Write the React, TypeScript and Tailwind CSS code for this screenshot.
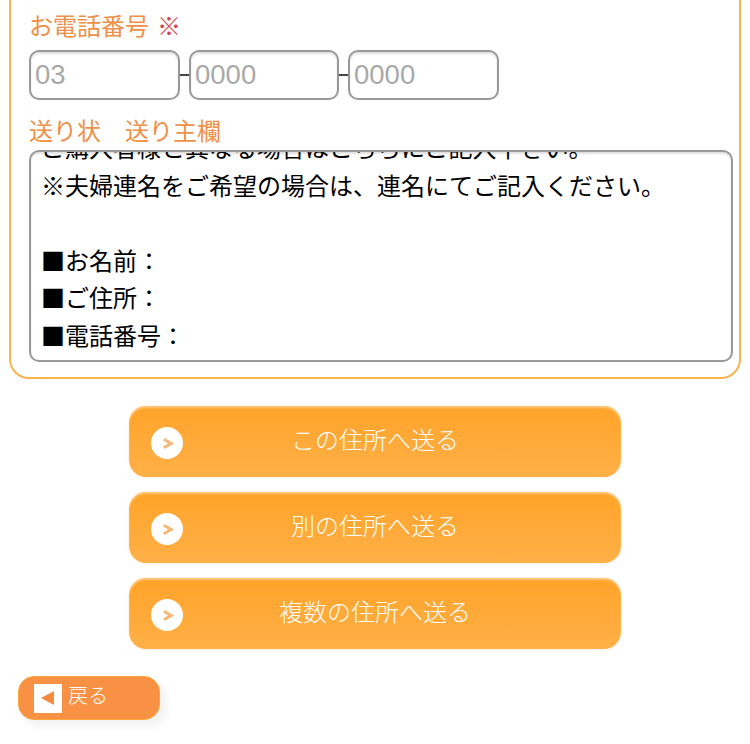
const font = "font-['Noto_Sans_CJK_JP','Noto_Sans',sans-serif]";

function PhoneInput({ placeholder, width }: { placeholder: string; width: string }) {
  return (
    <input
      placeholder={placeholder}
      className={`${width} h-[50px] px-[4px] text-[27.5px] leading-none text-black placeholder:text-[#a9a9a9] font-['Liberation_Sans',sans-serif] bg-white border-2 border-[#999999] rounded-[10px] outline-none shadow-[inset_0_2px_2px_rgba(0,0,0,0.12)]`}
    />
  );
}

function SendButton({ label }: { label: string }) {
  return (
    <button className="relative w-[492px] h-[71px] flex items-center justify-center rounded-[17px] bg-gradient-to-b from-[#ffa326] to-[#ffb047] shadow-[inset_0_2px_2px_rgba(255,255,255,0.4),0_0_2px_rgba(255,190,100,0.5)] text-white text-[24px] font-light">
      <span className="absolute left-[22px] top-[21px] w-[32px] h-[32px] rounded-full bg-white flex items-center justify-center">
        <svg width="17" height="17" viewBox="0 0 14 14" fill="none">
          <path d="M4 3.5 L10 7 L4 10.5" stroke="#f5b878" strokeWidth="2.6" />
        </svg>
      </span>
      <span className="pb-[5px]">{label}</span>
    </button>
  );
}

export default function App() {
  return (
    <div className={`w-[750px] h-[744px] overflow-hidden bg-white ${font}`}>
      <div className="mx-[9px] h-[379px] border-2 border-t-0 border-[#f8b34f] rounded-b-[20px] px-[18px] pt-[8px]">
        <div className="h-[34px] flex items-center text-[24px] text-[#ee9048]">
          お電話番号<span className="ml-[8px] text-[#d9434e]">※</span>
        </div>
        <div className="mt-[8px] flex items-center">
          <PhoneInput placeholder="03" width="w-[151px]" />
          <span className="w-[9px] h-[2px] bg-[#444444]" />
          <PhoneInput placeholder="0000" width="w-[150px]" />
          <span className="w-[9px] h-[2px] bg-[#444444]" />
          <PhoneInput placeholder="0000" width="w-[151px]" />
        </div>
        <div className="mt-[13px] h-[34px] flex items-center text-[24px] text-[#ee9048] whitespace-pre">
          送り状　送り主欄
        </div>
        <div className="w-[704px] h-[212px] mt-[3px] border-2 border-[#999999] rounded-[10px] overflow-hidden flex flex-col justify-end px-[10px] pb-[7px] text-[24px] leading-[37.5px] text-black bg-white shadow-[inset_0_2px_2px_rgba(0,0,0,0.12)]">
          <div className="shrink-0 whitespace-nowrap">ご購入者様と異なる場合はこちらにご記入下さい。</div>
          <div className="shrink-0 whitespace-nowrap">※夫婦連名をご希望の場合は、連名にてご記入ください。</div>
          <div className="shrink-0 h-[37.5px]" />
          <div className="shrink-0">■お名前：</div>
          <div className="shrink-0">■ご住所：</div>
          <div className="shrink-0">■電話番号：</div>
        </div>
      </div>
      <div className="mt-[27px] flex flex-col items-center gap-[15px]">
        <SendButton label="この住所へ送る" />
        <SendButton label="別の住所へ送る" />
        <SendButton label="複数の住所へ送る" />
      </div>
      <div className="mt-[27px] ml-[18px]">
        <button className="w-[142px] h-[44px] flex items-center gap-[6px] pl-[15px] rounded-[16px] bg-[#f89144] border border-[#fba63a] text-white text-[20px] font-light shadow-[6px_6px_10px_rgba(0,0,0,0.06)]">
          <span className="w-[28px] h-[29px] bg-white flex items-center justify-center">
            <svg width="16" height="16" viewBox="0 0 16 16">
              <path d="M1 8 L14 1 V15 Z" fill="#f48b3f" />
            </svg>
          </span>
          <span className="pb-[6px]">戻る</span>
        </button>
      </div>
    </div>
  );
}
